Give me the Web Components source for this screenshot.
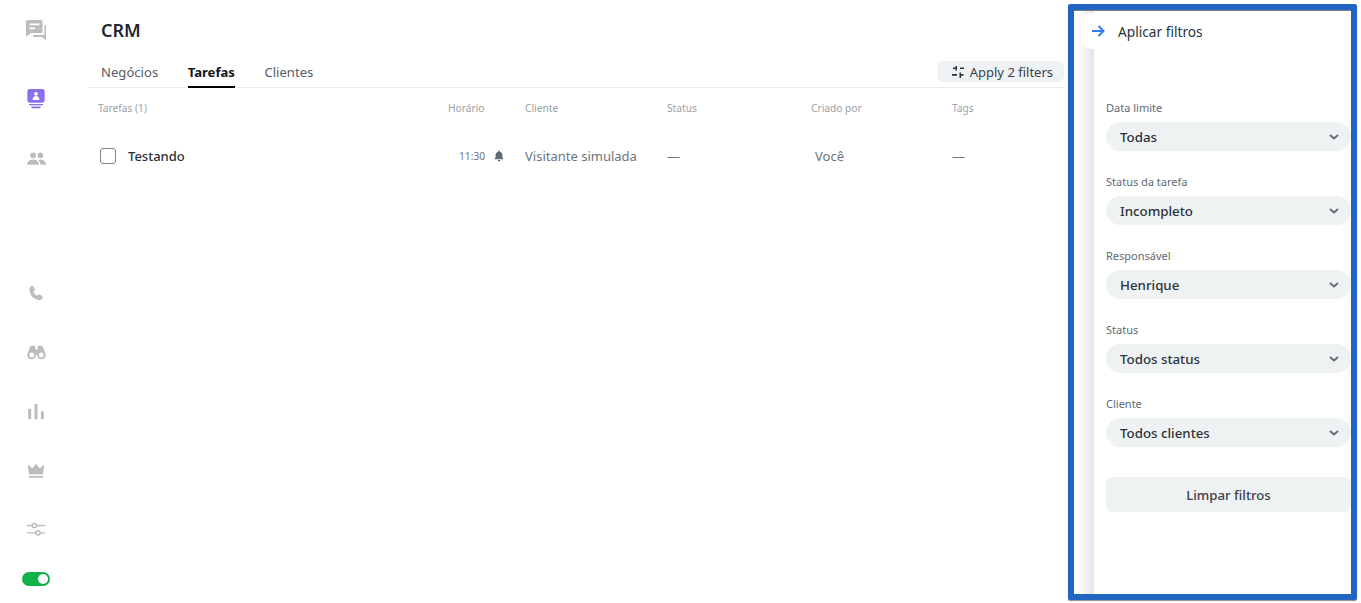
<!DOCTYPE html>
<html lang="pt-BR">
<head>
<meta charset="utf-8">
<title>CRM</title>
<style>
    html, body { margin: 0; height: 100%; background: #fff; }
    body { font-family: "Noto Sans", "Open Sans", sans-serif; overflow: hidden; }
</style>
</head>
<body>
<crm-app>
    <crm-sidebar slot="sidebar"></crm-sidebar>
    <crm-main slot="main"></crm-main>
    <filter-panel slot="panel">
        <filter-select label="Data limite" value="Todas"></filter-select>
        <filter-select label="Status da tarefa" value="Incompleto"></filter-select>
        <filter-select label="Responsável" value="Henrique"></filter-select>
        <filter-select label="Status" value="Todos status"></filter-select>
        <filter-select label="Cliente" value="Todos clientes"></filter-select>
    </filter-panel>
</crm-app>
<script>
// web components for the CRM tasks screen

const navIcons = {
    chat: '<path d="M2.500 1h13.500a1.500 1.500 0 0 1 1.500 1.500V12.500a1.500 1.500 0 0 1-1.500 1.500H6l-5 3.800V2.500A1.500 1.500 0 0 1 2.500 1z"/><path fill="#fff" d="M4.500 4.500h10v1.800h-10zM4.500 8.500h5.500v1.800H4.500z"/><path d="M19.500 6h1.500v15.500l-4-3.500H8v-2h11.500z"/>',
    crm: '<rect x="1.500" y="0" width="19" height="15" rx="2.500" fill="#8b6fe8"/><circle cx="11" cy="5.300" r="2.100" fill="#fff"/><path d="M7.300 12c0-2.900 1.500-4.300 3.700-4.300s3.700 1.400 3.700 4.300z" fill="#fff"/><path d="M3 16.500h16l-.7 1.400H3.700zM5.500 19.200h11l-1 2H6.500z" fill="#8b6fe8"/>',
    people: '<circle cx="7" cy="5" r="3.300"/><circle cx="15.500" cy="5" r="3.300"/><path d="M0 16c0-3.800 3-6 7-6s7 2.200 7 6z"/><path d="M15.500 16c0-2.400-.9-4.300-2.400-5.500.7-.3 1.500-.5 2.400-.5 3.800 0 6.500 2.200 6.500 6z"/>',
    phone: '<path d="M4.800 1.500c1.100-.9 2.400-.7 3.100.5l1.400 2.500c.5.900.3 2-.5 2.700l-1 .9c.9 2.200 2.400 3.800 4.500 5l1.200-1c.8-.7 1.700-.7 2.600-.1l2.300 1.500c1 .7 1.300 2 .4 3-1.300 1.600-3 2.300-5 1.700C8.300 17.100 4.300 12.800 3.300 7.500c-.5-2.300.2-4.500 1.500-6z"/>',
    binoculars: '<path d="M6 2h3.500v4h3V2H16c1.500 0 2.400 1 2.900 2.300l2.500 6.700a5 5 0 1 1-9.700 1.700h-1.400A5 5 0 1 1 .6 11l2.500-6.700C3.600 3 4.500 2 6 2z"/><circle cx="5.500" cy="12.700" r="2.800" fill="#fff"/><circle cx="16.500" cy="12.700" r="2.800" fill="#fff"/>',
    bars: '<rect x="1.500" y="7" width="3.600" height="13" rx="1"/><rect x="9.200" y="1" width="3.600" height="19" rx="1"/><rect x="17" y="10" width="3.600" height="10" rx="1"/>',
    crown: '<path d="M1 3l5.500 4.500L11 2l4.500 5.500L21 3l-1.500 12h-17z"/><rect x="2.500" y="17" width="17" height="2.200"/>',
    sliders: '<g fill="none" stroke="currentColor" stroke-width="1.800"><path d="M0 5.500h6.500M11.500 5.500H22M0 14.500h11M16 14.500h6"/><circle cx="9" cy="5.500" r="2.600"/><circle cx="13.500" cy="14.500" r="2.600"/></g>'
};

class CrmApp extends HTMLElement {
    constructor() {
        super()
        this.attachShadow({ mode: 'open' })
        this.shadowRoot.innerHTML = `
            <style>
                :host {
                    display: flex;
                    width: 1361px;
                    height: 603px;
                    box-sizing: border-box;
                }
                .side { flex: 0 0 72px; }
                .main { flex: 0 0 996px; }
                .panel { flex: 0 0 289px; padding-top: 4px; }
            </style>
            <div class="side"><slot name="sidebar"></slot></div>
            <div class="main"><slot name="main"></slot></div>
            <div class="panel"><slot name="panel"></slot></div>
        `
    }
}

class CrmNavIcon extends HTMLElement {
    constructor() {
        super()
        this.attachShadow({ mode: 'open' })
        this.shadowRoot.innerHTML = `
            <style>
                :host {
                    display: flex;
                    align-items: center;
                    justify-content: center;
                    height: 24px;
                    color: #bcbcbe;
                }
                svg { width: ${this.getAttribute('size') || 18}px; height: ${this.getAttribute('size') || 18}px; fill: currentColor; }
            </style>
            <svg viewBox="0 0 22 22">${navIcons[this.getAttribute('name')]}</svg>
        `
    }
}

class CrmToggle extends HTMLElement {
    constructor() {
        super()
        this.attachShadow({ mode: 'open' })
        this.shadowRoot.innerHTML = `
            <style>
                :host {
                    display: flex;
                    justify-content: flex-end;
                    align-items: center;
                    box-sizing: border-box;
                    width: 28px;
                    height: 14px;
                    padding-right: 2px;
                    border-radius: 7px;
                    background: #12b24b;
                }
                div { width: 10px; height: 10px; border-radius: 50%; background: #fff; }
            </style>
            <div></div>
        `
    }
}

class CrmSidebar extends HTMLElement {
    constructor() {
        super()
        this.attachShadow({ mode: 'open' })
        this.shadowRoot.innerHTML = `
            <style>
                :host {
                    display: flex;
                    flex-direction: column;
                    align-items: center;
                    height: 603px;
                    padding-top: 18px;
                    box-sizing: border-box;
                }
                crm-nav-icon { width: 24px; }
                .first { margin-bottom: 45px; }
                .second { margin-bottom: 37px; }
                .third { margin-bottom: 110px; }
                .low { margin-bottom: 35px; }
                .last { margin-bottom: 30px; }
            </style>
            <crm-nav-icon class="first" name="chat" size="22"></crm-nav-icon>
            <crm-nav-icon class="second" name="crm" size="20"></crm-nav-icon>
            <crm-nav-icon class="third" name="people" size="19"></crm-nav-icon>
            <crm-nav-icon class="low" name="phone"></crm-nav-icon>
            <crm-nav-icon class="low" name="binoculars" size="19"></crm-nav-icon>
            <crm-nav-icon class="low" name="bars"></crm-nav-icon>
            <crm-nav-icon class="low" name="crown"></crm-nav-icon>
            <crm-nav-icon class="last" name="sliders"></crm-nav-icon>
            <crm-toggle></crm-toggle>
        `
    }
}

const gridColumns = '350px 77px 142px 144px 141px 1fr'

class CrmTaskHead extends HTMLElement {
    constructor() {
        super()
        this.attachShadow({ mode: 'open' })
        this.shadowRoot.innerHTML = `
            <style>
                :host {
                    display: grid;
                    grid-template-columns: ${gridColumns};
                    padding: 12px 0 0 10px;
                    height: 16px;
                    line-height: 16px;
                    font-size: 10.200px;
                    color: #9aa0a6;
                }
                .time { width: 36px; text-align: right; white-space: nowrap; }
            </style>
            <span>Tarefas (1)</span>
            <span class="time">Horário</span>
            <span>Cliente</span>
            <span>Status</span>
            <span>Criado por</span>
            <span>Tags</span>
        `
    }
}

class CrmTaskRow extends HTMLElement {
    constructor() {
        super()
        this.attachShadow({ mode: 'open' })
        this.shadowRoot.innerHTML = `
            <style>
                :host {
                    display: grid;
                    grid-template-columns: ${gridColumns};
                    align-items: center;
                    margin-top: 20px;
                    padding-left: 10px;
                    height: 40px;
                    font-size: 13px;
                    color: #6c7480;
                }
                .task {
                    display: flex;
                    align-items: center;
                    gap: 12px;
                    padding-left: 2px;
                    font-weight: 500;
                    color: #2c323a;
                }
                .check {
                    width: 16px;
                    height: 16px;
                    box-sizing: border-box;
                    border: 1px solid #7d8590;
                    border-radius: 3px;
                }
                .time {
                    display: flex;
                    align-items: center;
                    padding-left: 11px;
                    font-size: 10.200px;
                    gap: 8px;
                }
                .time svg { width: 12px; height: 12px; fill: #5f6873; }
                .by { padding-left: 4px; }
            </style>
            <div class="task"><div class="check"></div><span>Testando</span></div>
            <div class="time"><span>11:30</span>
                <svg viewBox="0 0 12 12"><path d="M6 .5c.5 0 .8.3.8.8v.4c1.700.4 2.600 1.700 2.600 3.400v2.400l1 1.300v.5H1.600v-.5l1-1.300V5.100c0-1.700.9-3 2.600-3.400v-.4c0-.5.3-.8.8-.8zM4.800 10h2.400c0 .8-.5 1.400-1.200 1.400S4.800 10.800 4.800 10z"/></svg>
            </div>
            <span>Visitante simulada</span>
            <span>—</span>
            <span class="by">Você</span>
            <span>—</span>
        `
    }
}

class CrmMain extends HTMLElement {
    constructor() {
        super()
        this.attachShadow({ mode: 'open' })
        this.shadowRoot.innerHTML = `
            <style>
                :host {
                    display: block;
                    padding-left: 16px;
                    box-sizing: border-box;
                }
                h1 {
                    margin: 0;
                    padding: 18px 0 0 13px;
                    height: 43px;
                    font-size: 18px;
                    line-height: 25px;
                    font-weight: 600;
                    color: #21262c;
                }
                .bar {
                    display: flex;
                    align-items: flex-start;
                    height: 26px;
                    width: 963px;
                    padding-left: 13px;
                    border-bottom: 1px solid #e9ecef;
                }
                .tab {
                    height: 26px;
                    box-sizing: border-box;
                    margin-right: 29.500px;
                    font-size: 13.100px;
                    line-height: 22px;
                    color: #555d68;
                }
                .tab.on {
                    font-weight: 700;
                    color: #14171a;
                    border-bottom: 2px solid #000;
                    height: 27px;
                }
                .apply {
                    display: flex;
                    align-items: center;
                    gap: 6px;
                    margin-left: auto;
                    padding: 0 11px 0 15px;
                    height: 21px;
                    border-radius: 6px;
                    background: #eff2f3;
                    font-size: 13px;
                    color: #3a414a;
                }
                .apply svg { width: 12px; height: 12px; fill: #2c323a; }
            </style>
            <h1>CRM</h1>
            <div class="bar">
                <div class="tab">Negócios</div>
                <div class="tab on">Tarefas</div>
                <div class="tab">Clientes</div>
                <div class="apply">
                    <svg viewBox="0 0 12 12"><path d="M3.500 0H5v4.500H3.500V3H1V1.500h2.500zM8 1.500h4V3H8zM0 8h5v1.800H0zM7.500 6.500H9V8h2.500v1.800H9V12H7.500z"/></svg>
                    <span>Apply 2 filters</span>
                </div>
            </div>
            <crm-task-head></crm-task-head>
            <crm-task-row></crm-task-row>
        `
    }
}

class FilterSelect extends HTMLElement {
    constructor() {
        super()
        this.attachShadow({ mode: 'open' })
        this.shadowRoot.innerHTML = `
            <style>
                :host { display: block; height: 74px; }
                .label {
                    height: 17px;
                    line-height: 17px;
                    margin-bottom: 6px;
                    font-size: 11px;
                    color: #5f6873;
                }
                .pill {
                    display: flex;
                    align-items: center;
                    justify-content: space-between;
                    height: 29px;
                    padding: 0 12px 0 14px;
                    border-radius: 15px;
                    background: #eff2f3;
                    font-size: 13.300px;
                    font-weight: 500;
                    color: #2c323a;
                }
                svg { width: 10px; height: 6px; fill: none; stroke: #5f6873; stroke-width: 1.800; }
            </style>
            <div class="label">${this.getAttribute('label')}</div>
            <div class="pill">
                <span>${this.getAttribute('value')}</span>
                <svg viewBox="0 0 10 6"><path d="M1 1l4 3.500L9 1"/></svg>
            </div>
        `
    }
}

class FilterPanel extends HTMLElement {
    constructor() {
        super()
        this.attachShadow({ mode: 'open' })
        this.shadowRoot.innerHTML = `
            <style>
                :host {
                    display: block;
                    position: relative;
                    width: 289px;
                    height: 596px;
                    box-sizing: border-box;
                    border: 6px solid #2065c2;
                    border-radius: 2px;
                    background: #fff;
                    box-shadow: 0 1px 1px rgba(0, 0, 0, .45);
                }
                .inner {
                    display: flex;
                    height: 100%;
                    border-top: 1px solid #7c7f84;
                    box-sizing: border-box;
                }
                .gutter {
                    flex: 0 0 20px;
                    background: linear-gradient(to right, #fff 20%, #e3e4e6);
                }
                .body { flex: 1; padding-left: 12px; min-width: 0; }
                .title {
                    height: 88px;
                    box-sizing: border-box;
                    padding: 11px 0 0 12px;
                    font-size: 13.700px;
                    line-height: 20px;
                    color: #2c323a;
                }
                .tab {
                    position: absolute;
                    left: 8px;
                    top: 3px;
                    width: 12px;
                    height: 36px;
                    border-radius: 9px 0 0 9px;
                    background: #fff;
                }
                .arrow {
                    position: absolute;
                    left: 17px;
                    top: 14px;
                    width: 14px;
                    height: 14px;
                    fill: none;
                    stroke: #2f80ed;
                    stroke-width: 2;
                }
                button {
                    display: block;
                    width: 100%;
                    height: 35px;
                    margin-top: 8px;
                    padding: 0;
                    border: 0;
                    border-radius: 6px;
                    background: #eff2f3;
                    font: 500 13.200px "Noto Sans", "Open Sans", sans-serif;
                    color: #3a414a;
                }
            </style>
            <div class="inner">
                <div class="gutter"></div>
                <div class="body">
                    <div class="title">Aplicar filtros</div>
                    <slot></slot>
                    <button>Limpar filtros</button>
                </div>
            </div>
            <div class="tab"></div>
            <svg class="arrow" viewBox="0 0 14 14"><path d="M1 7h11.500M7.500 2l5 5-5 5"/></svg>
        `
    }
}

customElements.define('crm-app', CrmApp)
customElements.define('crm-nav-icon', CrmNavIcon)
customElements.define('crm-toggle', CrmToggle)
customElements.define('crm-sidebar', CrmSidebar)
customElements.define('crm-task-head', CrmTaskHead)
customElements.define('crm-task-row', CrmTaskRow)
customElements.define('crm-main', CrmMain)
customElements.define('filter-select', FilterSelect)
customElements.define('filter-panel', FilterPanel)
</script>
</body>
</html>
